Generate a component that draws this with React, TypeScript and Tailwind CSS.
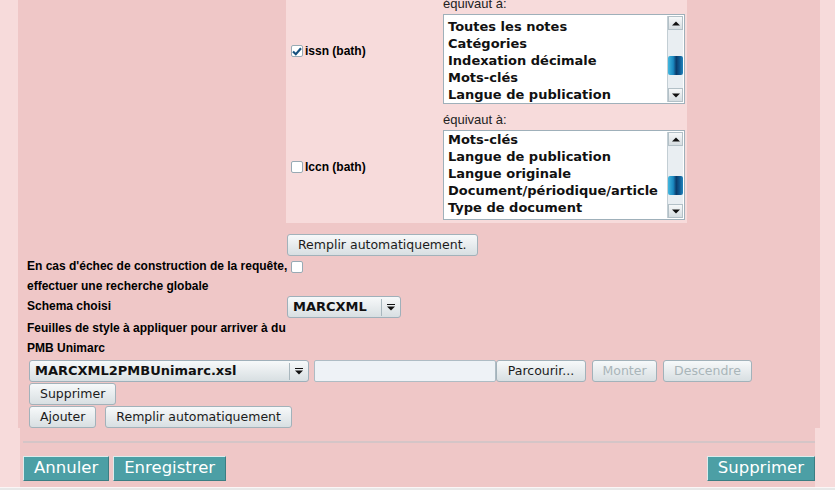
import React from "react";

const label = "font-['Liberation_Sans',Arial,sans-serif]";
const ctl = "font-['DejaVu_Sans',Verdana,sans-serif]";

function Check({ checked }: { checked?: boolean }) {
    return (
        <span className="flex w-[12px] h-[12px] shrink-0 items-center justify-center border border-[#98aab4] bg-white rounded-[2px]">
            {checked && (
                <svg width="10" height="9" viewBox="0 0 10 9">
                    <path d="M1 4.5 L3.8 7.2 L9 1.2" fill="none" stroke="#16507e" strokeWidth="2.2" />
                </svg>
            )}
        </span>
    );
}

function Arrow() {
    return (
        <svg width="8" height="7" viewBox="0 0 8 7">
            <rect x="0" y="0" width="8" height="1" fill="#111" />
            <path d="M0 2.5 H8 L4 6.5 Z" fill="#111" />
        </svg>
    );
}

function ScrollBtn({ up }: { up?: boolean }) {
    return (
        <div className="h-[14px] flex items-center justify-center bg-linear-to-b from-[#f6f8f9] to-[#d6dde1] border border-[#b3c0c7]">
            <svg width="8" height="5" viewBox="0 0 8 5">
                {up ? <path d="M0 4.5 H8 L4 0.5 Z" fill="#111" /> : <path d="M0 0.5 H8 L4 4.5 Z" fill="#111" />}
            </svg>
        </div>
    );
}

function Listbox({ items, pad, thumb }: { items: string[]; pad: string; thumb: string }) {
    return (
        <div className="flex w-[242px] h-[90px] border border-[#9fb0ba] bg-white">
            <div className={`flex-1 overflow-hidden pl-[4px] ${pad}`}>
                {items.map((it) => (
                    <div key={it} className={`${ctl} text-[13px] font-bold leading-[17px] text-[#111] whitespace-nowrap`}>
                        {it}
                    </div>
                ))}
            </div>
            <div className="w-[16px] my-[1px] mr-[1px] flex flex-col bg-[#e9eef2] border-l border-[#c3ced4]">
                <ScrollBtn up />
                <div className="flex-1">
                    <div className={`h-[19px] rounded-[2px] bg-[linear-gradient(to_right,#44b8df,#1a88c0_35%,#0a3a6a_55%,#0f5a92_78%,#2385bd)] ${thumb}`} />
                </div>
                <ScrollBtn />
            </div>
        </div>
    );
}

function MapRow({ name, checked, items, pad, thumb }: { name: string; checked?: boolean; items: string[]; pad: string; thumb: string }) {
    return (
        <div className="flex items-center pt-[7px] pb-[3px]">
            <div className="w-[157px] pl-[5px] flex items-center gap-[2px]">
                <Check checked={checked} />
                <span className={`${label} text-[12px] font-bold text-black`}>{name}</span>
            </div>
            <div className="flex flex-col">
                <div className={`${label} text-[13px] leading-[12px] h-[16px] text-[#222]`}>équivaut à:</div>
                <Listbox items={items} pad={pad} thumb={thumb} />
            </div>
        </div>
    );
}

function Btn({ children, disabled, className = "" }: { children: React.ReactNode; disabled?: boolean; className?: string }) {
    return (
        <button
            className={`${ctl} flex items-center justify-center h-[22px] px-[10px] text-[12.5px] leading-none border border-[#a2b2ba] rounded-[3px] bg-linear-to-b from-[#f7f9fa] to-[#d8dfe2] whitespace-nowrap ${disabled ? "text-[#a9b5b9]" : "text-[#1b1b1b]"} ${className}`}
        >
            {children}
        </button>
    );
}

function Select({ text, className }: { text: string; className: string }) {
    return (
        <div className={`flex h-[22px] items-center border border-[#9fb0ba] rounded-[3px] bg-linear-to-b from-[#f7f9fa] to-[#d8dfe2] ${className}`}>
            <span className={`${ctl} flex-1 pl-[5px] text-[13px] font-bold text-[#111] whitespace-nowrap`}>{text}</span>
            <span className="w-px h-[17px] bg-[#a9b7be]" />
            <span className="w-[18px] flex justify-center">
                <Arrow />
            </span>
        </div>
    );
}

function TealBtn({ children, className = "" }: { children: React.ReactNode; className?: string }) {
    return (
        <button className={`${ctl} flex items-center h-[25px] px-[10px] text-[16.5px] leading-none text-white bg-[#4c9fa5] border border-t-[#dcecec] border-l-[#dcecec] border-r-[#3b7e83] border-b-[#3b7e83] ${className}`}>
            {children}
        </button>
    );
}

export default function App() {
    return (
        <div className="w-[835px] h-[490px] overflow-hidden bg-[#f7dbdb]">
            <div className="ml-[18px] w-[802px] -mt-[9px] bg-[#efc7c7]">
                {/* correspondances */}
                <div className="flex">
                    <div className="w-[268px]" />
                    <div className="w-[401px] bg-[#f7dbdb]">
                        <MapRow
                            name="issn (bath)"
                            checked
                            items={["Toutes les notes", "Catégories", "Indexation décimale", "Mots-clés", "Langue de publication"]}
                            pad="pt-[3px]"
                            thumb="mt-[26px]"
                        />
                        <MapRow
                            name="lccn (bath)"
                            items={["Mots-clés", "Langue de publication", "Langue originale", "Document/périodique/article", "Type de document"]}
                            pad="pt-[0px]"
                            thumb="mt-[30px]"
                        />
                    </div>
                </div>

                <div className="flex">
                    <div className="w-[268px]" />
                    <div className="flex pt-[11px] pl-[1px]">
                        <Btn>Remplir automatiquement.</Btn>
                    </div>
                </div>

                <div className="flex">
                    <div className={`w-[268px] pl-[9px] ${label} text-[12px] font-bold leading-[20px] text-black whitespace-nowrap`}>
                        <div>En cas d'échec de construction de la requête,</div>
                        <div>effectuer une recherche globale</div>
                    </div>
                    <div className="pt-[5px] pl-[5px]">
                        <Check />
                    </div>
                </div>

                <div className="flex">
                    <div className={`w-[268px] pl-[9px] ${label} text-[12px] font-bold leading-[20px] text-black`}>Schema choisi</div>
                    <Select text="MARCXML" className="w-[114px] ml-[1px]" />
                </div>

                <div className={`pl-[9px] ${label} text-[12px] font-bold leading-[20px] text-black`}>
                    <div>Feuilles de style à appliquer pour arriver à du</div>
                    <div>PMB Unimarc</div>
                </div>

                <div className="flex items-center pt-[2px] pl-[11px]">
                    <Select text="MARCXML2PMBUnimarc.xsl" className="w-[280px]" />
                    <div className="ml-[5px] w-[182px] h-[22px] border border-[#aebcc4] rounded-[2px] bg-[#eef2f6]" />
                    <Btn className="w-[90px] px-0">Parcourir...</Btn>
                    <Btn disabled className="ml-[6px] w-[65px] px-0">Monter</Btn>
                    <Btn disabled className="ml-[6px] w-[89px] px-0">Descendre</Btn>
                </div>
                <div className="flex pt-[1px] pl-[11px]">
                    <Btn>Supprimer</Btn>
                </div>
                <div className="flex pt-[1px] pl-[11px] gap-[9px]">
                    <Btn>Ajouter</Btn>
                    <Btn>Remplir automatiquement</Btn>
                </div>
            </div>

            <div className="ml-[20px] w-[795px] bg-[#efc7c7] pt-[13px] pb-[6px]">
                <div className="ml-[3px] h-[2px] bg-[#d5c5c7]" />
                <div className="flex mt-[13px] pl-[3px]">
                    <TealBtn>Annuler</TealBtn>
                    <TealBtn className="ml-[4px]">Enregistrer</TealBtn>
                    <TealBtn className="ml-auto">Supprimer</TealBtn>
                </div>
            </div>
            <div className="h-[10px] border-t border-[#fbf6f6] bg-[#e8e8e8]" />
        </div>
    );
}
